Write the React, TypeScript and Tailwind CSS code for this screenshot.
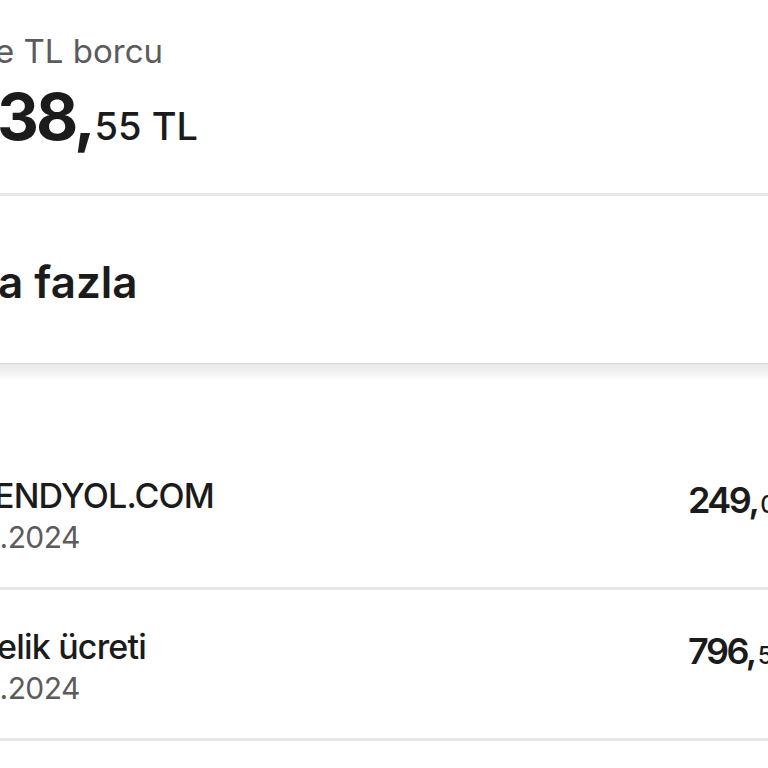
import React from "react";

const rows = [
  { title: "ENDYOL.COM", date: "1.2024", amount: "249", decimals: "00 TL", titleShift: "-ml-[6px]" },
  { title: "elik ücreti", date: "1.2024", amount: "796", decimals: "50 TL", titleShift: "-ml-[3px]" },
];

export default function App() {
  return (
    <div className="w-[768px] h-[768px] overflow-hidden bg-white text-[#1b1b1b] font-['Inter',sans-serif]">
      {/* Debt summary */}
      <div className="h-[193px] pt-[35px]">
        <div className="-ml-[5px] text-[33px] leading-none text-[#5b5b5b] whitespace-nowrap">e TL borcu</div>
        <div className="mt-[16px] -ml-[3px] flex items-baseline whitespace-nowrap">
          <span className="text-[65px] leading-none font-bold tracking-[-3px]">38,</span>
          <span className="ml-[2px] text-[38px] leading-none font-medium">55 TL</span>
        </div>
      </div>
      <div className="h-[3px] bg-[#e7e7e7]" />

      {/* Filter header */}
      <div className="h-[168px] pt-[64px] border-b border-[#d9d9d9]">
        <div className="-ml-[2px] text-[44px] leading-none font-semibold whitespace-nowrap">a fazla</div>
      </div>
      <div className="h-[18px] bg-linear-to-b from-[#e8e8e8] via-[#f3f3f3] to-white" />

      {/* Transactions */}
      <div className="pt-[57px]">
        {rows.map((r) => (
          <div key={r.title} className="border-b-[3px] border-[#e7e7e7]">
            <div className="flex items-start pt-[40px] pb-[35px]">
              <div className="w-[688px] shrink-0">
                <div className={`${r.titleShift} text-[34px] leading-none font-medium tracking-[-0.8px] whitespace-nowrap`}>{r.title}</div>
                <div className="mt-[9px] -ml-[12px] text-[30px] leading-none tracking-[-0.6px] text-[#5b5b5b] whitespace-nowrap">{r.date}</div>
              </div>
              <div className="mt-[3px] flex items-baseline whitespace-nowrap">
                <span className="text-[36px] leading-none font-semibold tracking-[-2.5px]">{r.amount},</span>
                <span className="ml-[3px] text-[24px] leading-none font-medium">{r.decimals}</span>
              </div>
            </div>
          </div>
        ))}
      </div>
    </div>
  );
}
